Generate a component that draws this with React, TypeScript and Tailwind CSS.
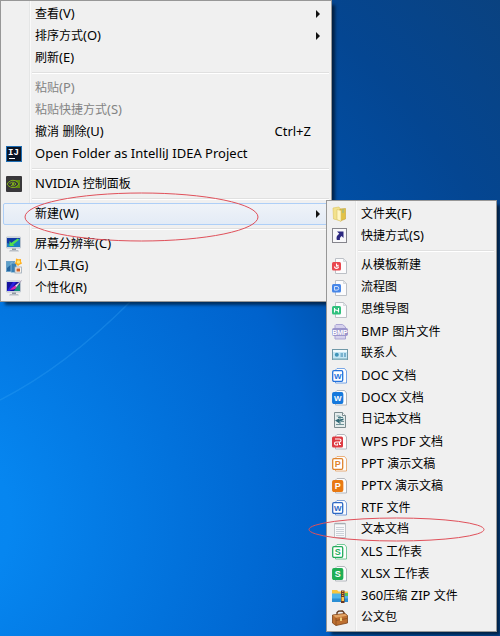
import type { ReactNode } from 'react';

type Tone = 'outline' | 'solid';

type MenuEntry = {
  label: string;
  icon?: ReactNode;
  shortcut?: string;
  disabled?: boolean;
  arrow?: boolean;
  active?: boolean;
};

const ICON = 'block h-4 w-4 shrink-0';

function IdeaIcon() {
  return (
    <svg className={ICON} viewBox="0 0 16 16" aria-hidden="true">
      <rect width="16" height="16" fill="#1c6cb4" />
      <rect x="1" y="1" width="14" height="14" fill="#0b1524" />
      <text x="2" y="9" fontFamily="Liberation Mono" fontWeight="700" fontSize="9" fill="#fff">
        IJ
      </text>
      <rect x="3" y="12" width="6" height="1" fill="#fff" />
    </svg>
  );
}

function NvidiaIcon() {
  return (
    <svg className={ICON} viewBox="0 0 16 16" aria-hidden="true">
      <rect width="16" height="16" rx="1" fill="#38373a" />
      <path d="M7 4h7v8H7z" fill="#5f8a10" />
      <path d="M1 8c2-3 4.500-4 7-3.600 2.500.4 4 1.800 5 3.600-2 2.800-4.500 4-7 3.500C3.600 11 2 9.700 1 8z" fill="#38373a" stroke="#7fae1c" />
      <path d="M3.500 8c1.700-2.200 4-2.600 6.500 0-1.500 2-3.500 2.400-5 1.300" fill="none" stroke="#7fae1c" />
      <circle cx="7" cy="8" r="1.200" fill="#7fae1c" />
    </svg>
  );
}

function MonitorIcon({ brush = false }: { brush?: boolean }) {
  return (
    <svg className={ICON} viewBox="0 0 16 16" aria-hidden="true">
      <rect x=".5" y="1" width="14" height="11" rx=".5" fill="#dfe6ee" stroke="#b9c2cc" />
      <rect x="1" y="2" width="13" height="9" fill={brush ? '#1612a0' : '#1238a4'} />
      {brush ? (
        <>
          <path d="M1 11l6-9h3L4 11z" fill="#2c22e0" />
          <path d="M10.500 7L14 4v7H8z" fill="#14907c" />
          <path d="M9.500 5.500C7 6 6.500 8 4 9.500c3 .6 6-.2 6.500-2.500z" fill="#d92bb0" />
          <path d="M15.500.5L9 5.800l1.500 1.300z" fill="#f2eef8" stroke="#9a8da8" strokeWidth=".5" />
        </>
      ) : (
        <>
          <path d="M1 11V7l3 1 5-4 5-1.500V11z" fill="#1a80c0" />
          <path d="M3.500 5v5h5L7 8.800l6-5-1.200-1.200L5.200 7z" fill="#52e04a" />
        </>
      )}
      <path d="M6 12.500h4V14H6z" fill="#8e98a3" />
      <path d="M4 14h8l1 1.500H3z" fill="#b8bec6" />
    </svg>
  );
}

function GadgetIcon() {
  return (
    <svg className={ICON} viewBox="0 0 16 16" aria-hidden="true">
      <rect x=".5" y="3.500" width="8" height="10" fill="#2466a0" stroke="#6ba0c8" />
      <path d="M1 4h7L1 10z" fill="#5c9fc8" />
      <rect x="5" y="5" width="5.500" height="9.500" fill="#3a80b4" stroke="#a8cde2" strokeWidth=".7" />
      <rect x="9" y="9" width="6.500" height="6" fill="#faf4ee" stroke="#9cabb8" strokeWidth=".8" />
      <rect x="10.500" y="10.500" width="3.500" height="3" fill="#cf6128" />
      <path d="M10 .5l2.500.8L15 1v2.500l1 2-2.500 1.300L12 8l-1.500-1.500-1.500-1 .8-2z" fill="#ffae1a" />
      <circle cx="12.500" cy="4" r="1.800" fill="#ffe678" />
    </svg>
  );
}

function FolderIcon() {
  return (
    <svg className={ICON} viewBox="0 0 16 16" aria-hidden="true">
      <path d="M1 2l6-1 1 1.500v12L1.500 13z" fill="#f3e28c" stroke="#dcc35c" strokeWidth=".6" />
      <path d="M8 3l5.500-.5V13L8 15z" fill="#e2c245" stroke="#c7a334" strokeWidth=".6" />
      <path d="M5 3.500l4 1v11L5 13.500z" fill="#fff6c4" stroke="#d9c368" strokeWidth=".6" />
      <path d="M11 3v4" stroke="#86b89c" />
    </svg>
  );
}

function ShortcutIcon() {
  return (
    <svg className={ICON} viewBox="0 0 16 16" aria-hidden="true">
      <rect x=".5" y=".5" width="14" height="14" fill="#f8f8fa" stroke="#85858c" />
      <path d="M5 3.500h6.500V10L9.600 8C8 9.300 7.500 10.500 8 12H4.800C4 9.500 5 7 7.300 5.800z" fill="#2c2880" />
    </svg>
  );
}

// White page with a coloured badge on its left side
function PageIcon({ color, children }: { color: string; children: ReactNode }) {
  return (
    <svg className={ICON} viewBox="0 0 16 16" aria-hidden="true">
      <path d="M3.500.5h8l3 3v12h-11z" fill="#fcfcfd" stroke="#bcc0c6" />
      <path d="M11.500.5v3h3z" fill="#e5e8ec" stroke="#c4c7cc" strokeWidth=".6" />
      <rect y="4" width="9" height="8.500" rx="1.500" fill={color} />
      {children}
    </svg>
  );
}

function OfficeIcon({ color, letter, tone }: { color: string; letter: string; tone: Tone }) {
  const solid = tone === 'solid';
  return (
    <svg className={ICON} viewBox="0 0 16 16" aria-hidden="true">
      <path
        d="M5 .5h7.500l2 2.500v12H3.500V2z"
        fill="#fdfdfd"
        stroke={solid ? '#b3b7bd' : color}
        strokeOpacity={solid ? 1 : 0.6}
      />
      <rect x=".7" y="2.700" width="10" height="10.600" rx="1.300" fill={solid ? color : '#fff'} stroke={color} strokeWidth="1.300" />
      <text
        x="5.700"
        y={letter === 'W' ? 10.8 : 11.2}
        textAnchor="middle"
        fontFamily="Liberation Sans"
        fontWeight="700"
        fontSize={letter === 'W' ? 8 : 9}
        fill={solid ? '#fff' : color}
      >
        {letter}
      </text>
    </svg>
  );
}

function PdfIcon() {
  return (
    <svg className={ICON} viewBox="0 0 16 16" aria-hidden="true">
      <path d="M5 .5h7.500l2 2.500v12H3.500V2z" fill="#fdfdfd" stroke="#b3b7bd" />
      <rect y="2.500" width="11" height="11" rx="1.500" fill="#dd3a42" />
      <path
        d="M3 5h4.500a1.500 1.500 0 0 1 0 3H4a1.500 1.500 0 0 0 0 3h1.500V9.500M7.500 8v2.500H9"
        fill="none"
        stroke="#fff"
        strokeWidth="1.100"
      />
    </svg>
  );
}

function BmpIcon() {
  return (
    <svg className={ICON} viewBox="0 0 16 16" aria-hidden="true">
      <path d="M4 .5h6.500L13.500 3v12H3V1.500z" fill="#d5d1ec" stroke="#aba5d4" />
      <rect y="4" width="16" height="8" rx="2" fill="#9b95cb" />
      <text x="8" y="10.700" textAnchor="middle" fontFamily="Liberation Sans" fontWeight="700" fontSize="7" fill="#fff">
        BMP
      </text>
    </svg>
  );
}

function ContactIcon() {
  return (
    <svg className={ICON} viewBox="0 0 16 16" aria-hidden="true">
      <rect x=".5" y="3.500" width="15" height="10" fill="#c4e6f4" stroke="#7099a8" />
      <path d="M1 4h14v2H1z" fill="#f1fafd" />
      <path d="M1 12h14v1.500H1z" fill="#9cc6d4" />
      <circle cx="4.800" cy="8.800" r="2" fill="#3f94b8" />
      <path d="M8.500 8H11M12 8h2M8.500 10H11M12 10h2" stroke="#2f7fa8" />
    </svg>
  );
}

function JournalIcon() {
  return (
    <svg className={ICON} viewBox="0 0 16 16" aria-hidden="true">
      <path d="M2.500.5h8l3 3v12h-11z" fill="#e4ecec" stroke="#7b8c8f" />
      <path d="M10.500.5v3h3" fill="#fff" stroke="#7b8c8f" />
      <path d="M4.500 4h3M9 9.500h3M4 12.500h8" stroke="#6f9398" />
      <path d="M3 8.500l4-2v1.300l4.500-1.300v1.500L7.500 9.500v2z" fill="#2c6673" />
      <path d="M8 4v8M6 5.500h5" stroke="#4a7d86" />
    </svg>
  );
}

function TextIcon() {
  return (
    <svg className={ICON} viewBox="0 0 16 16" aria-hidden="true">
      <rect x="2.500" y="1.500" width="11" height="14" fill="#f8f9fa" stroke="#c0c4c8" />
      <path d="M4 .8v1.700M6 .8v1.700M8 .8v1.700M10 .8v1.700M12 .8v1.700" stroke="#8b9398" strokeWidth=".9" />
      <path d="M4 5.500h8M4 7.500h8M4 9.500h8M4 11.500h8M4 13.500h8" stroke="#c0c8d0" strokeWidth=".8" />
    </svg>
  );
}

function ZipIcon() {
  return (
    <svg className={ICON} viewBox="0 0 16 16" aria-hidden="true">
      <path d="M0 2h5l1.500 1.500H16V8H0z" fill="#fbc53c" />
      <path d="M0 5.500h16V14H0z" fill="#4fb4ea" />
      <path d="M0 10.500h16V14H0z" fill="#2b8fd4" />
      <rect x="9" y="2.500" width="3.500" height="12.500" fill="#6b3822" />
      <path d="M10.700 3v7" stroke="#f0a83a" strokeWidth="1.500" strokeDasharray="1 1" />
      <rect x="9.500" y="9" width="2.500" height="4" rx=".6" fill="#ffc94a" />
      <path d="M13 5h3v3h-3z" fill="#58c456" />
    </svg>
  );
}

function BriefcaseIcon() {
  return (
    <svg className={ICON} viewBox="0 0 16 16" aria-hidden="true">
      <path d="M5 5V2.500L6.500 1.200l4-.2L12 2.500v2" fill="none" stroke="#573017" strokeWidth="1.300" />
      <path d="M.5 5L13 3.500l2.500 2V13L4 15.500.5 13z" fill="#bd6f30" stroke="#7c4318" strokeWidth=".8" />
      <path d="M1 5.200L13 4l2 1.700-11 2z" fill="#e2a465" />
      <path d="M4 8v7.500M4 10.500l11-2" stroke="#8b4b1c" strokeWidth=".8" />
      <rect x="8" y="7.500" width="2" height="3.500" fill="#f0cd79" />
    </svg>
  );
}

const mainGroups: MenuEntry[][] = [
  [
    { label: '查看(V)', arrow: true },
    { label: '排序方式(O)', arrow: true },
    { label: '刷新(E)' },
  ],
  [
    { label: '粘贴(P)', disabled: true },
    { label: '粘贴快捷方式(S)', disabled: true },
    { label: '撤消 删除(U)', shortcut: 'Ctrl+Z' },
    { label: 'Open Folder as IntelliJ IDEA Project', icon: <IdeaIcon /> },
  ],
  [{ label: 'NVIDIA 控制面板', icon: <NvidiaIcon /> }],
  [{ label: '新建(W)', arrow: true, active: true }],
  [
    { label: '屏幕分辨率(C)', icon: <MonitorIcon /> },
    { label: '小工具(G)', icon: <GadgetIcon /> },
    { label: '个性化(R)', icon: <MonitorIcon brush /> },
  ],
];

const newGroups: MenuEntry[][] = [
  [
    { label: '文件夹(F)', icon: <FolderIcon /> },
    { label: '快捷方式(S)', icon: <ShortcutIcon /> },
  ],
  [
    {
      label: '从模板新建',
      icon: (
        <PageIcon color="#e9474f">
          <path d="M4.500 5.500v3M2.500 8.500c0 2.500 4 2.500 4 0M4.500 8.500l2-1.500" fill="none" stroke="#fff" strokeWidth="1.100" />
        </PageIcon>
      ),
    },
    {
      label: '流程图',
      icon: (
        <PageIcon color="#4686e8">
          <path d="M2.500 6.500H5a1.800 1.800 0 0 1 0 3.600H2.500z" fill="none" stroke="#cfe0fb" />
        </PageIcon>
      ),
    },
    {
      label: '思维导图',
      icon: (
        <PageIcon color="#2fc07c">
          <path d="M2.500 6v4.500M6.500 6v4.500M2.500 7.500l4 1.500" fill="none" stroke="#fff" strokeWidth="1.100" />
        </PageIcon>
      ),
    },
    { label: 'BMP 图片文件', icon: <BmpIcon /> },
    { label: '联系人', icon: <ContactIcon /> },
    { label: 'DOC 文档', icon: <OfficeIcon color="#2472dc" letter="W" tone="outline" /> },
    { label: 'DOCX 文档', icon: <OfficeIcon color="#1679dc" letter="W" tone="solid" /> },
    { label: '日记本文档', icon: <JournalIcon /> },
    { label: 'WPS PDF 文档', icon: <PdfIcon /> },
    { label: 'PPT 演示文稿', icon: <OfficeIcon color="#df842e" letter="P" tone="outline" /> },
    { label: 'PPTX 演示文稿', icon: <OfficeIcon color="#e87912" letter="P" tone="solid" /> },
    { label: 'RTF 文件', icon: <OfficeIcon color="#2d68c4" letter="W" tone="outline" /> },
    { label: '文本文档', icon: <TextIcon /> },
    { label: 'XLS 工作表', icon: <OfficeIcon color="#22ac5b" letter="S" tone="outline" /> },
    { label: 'XLSX 工作表', icon: <OfficeIcon color="#1fae55" letter="S" tone="solid" /> },
    { label: '360压缩 ZIP 文件', icon: <ZipIcon /> },
    { label: '公文包', icon: <BriefcaseIcon /> },
  ],
];

// Latin runs are set one size up so they sit evenly beside the Chinese glyphs
function Label({ text }: { text: string }) {
  const runs = text.match(/[\u4e00-\u9fff]+|[^\u4e00-\u9fff]+/g) ?? [];
  return (
    <span className="whitespace-pre">
      {runs.map((run, i) => (
        <span key={i} className={/[\u4e00-\u9fff]/.test(run) ? 'text-[12px]' : 'text-[13px]'}>
          {run}
        </span>
      ))}
    </span>
  );
}

function MenuItem({ entry }: { entry: MenuEntry }) {
  return (
    <button
      type="button"
      role="menuitem"
      disabled={entry.disabled}
      aria-haspopup={entry.arrow ? 'menu' : undefined}
      className={`flex h-[22px] w-full items-center rounded-xs border pr-2 pl-[2px] text-left text-[12px] leading-4 ${
        entry.active
          ? 'border-[#aecff7] bg-linear-to-b from-[#eff3f8] to-[#e3ebf6]'
          : 'border-transparent'
      } ${entry.disabled ? 'text-[#838383]' : 'text-black'}`}
    >
      <span className="mr-[13px] h-4 w-4 shrink-0">{entry.icon}</span>
      <span className="flex-1 pb-[2px]">
        <Label text={entry.label} />
      </span>
      {entry.shortcut && (
        <span className="mr-[9px] pb-[2px]">
          <Label text={entry.shortcut} />
        </span>
      )}
      {entry.arrow && (
        <svg className="h-2 w-1" viewBox="0 0 4 8" aria-hidden="true">
          <path d="M0 0l4 4-4 4z" fill="#111" />
        </svg>
      )}
    </button>
  );
}

function Menu({ label, groups }: { label: string; groups: MenuEntry[][] }) {
  return (
    <div
      role="menu"
      aria-label={label}
      className="border border-[#979797] bg-[#f0f0f0] bg-[linear-gradient(to_right,transparent_28px,#e5e6e6_28px,#e5e6e6_29px,#fafafa_29px,#fafafa_30px,transparent_30px)] p-[2px] shadow-[4px_4px_3px_-1px_rgba(0,0,0,0.55)]"
    >
      {groups.map((group, i) => (
        <div key={i}>
          {i > 0 && (
            <div role="separator" className="flex h-2 items-center pl-[29px]">
              <div className="h-[2px] w-full border-t border-[#e0e0e0] bg-white" />
            </div>
          )}
          {group.map((entry) => (
            <MenuItem key={entry.label} entry={entry} />
          ))}
        </div>
      ))}
    </div>
  );
}

export default function App() {
  return (
    <main className="relative min-h-screen overflow-hidden bg-[radial-gradient(circle_at_-80px_520px,#0788f4_0px,#0686f0_90px,#0272dc_260px,#0062cc_400px,#0052ac_480px,#044692_640px,#0a4280_780px)] font-['Noto_Sans','Noto_Sans_CJK_SC',sans-serif]">
      <svg className="absolute top-0 left-0 h-[636px] w-[500px]" viewBox="0 0 500 636" aria-hidden="true">
        <path d="M0 400Q65 367 130 302" fill="none" stroke="#39a5f4" strokeOpacity=".3" strokeWidth="1.500" />
      </svg>

      <div className="relative w-[332px]">
        <Menu label="桌面" groups={mainGroups} />
      </div>

      {/* Submenu of 新建 */}
      <div className="absolute top-[200px] left-[326px] w-[171px]">
        <Menu label="新建" groups={newGroups} />
      </div>

      {/* Hand-drawn marks */}
      <svg
        className="pointer-events-none absolute top-0 left-0 h-[636px] w-[500px]"
        viewBox="0 0 500 636"
        fill="none"
        stroke="#e0505a"
        aria-hidden="true"
      >
        <ellipse cx="141.500" cy="217" rx="116.500" ry="24" />
        <ellipse cx="396.500" cy="529.500" rx="87.500" ry="11.500" />
      </svg>
    </main>
  );
}
